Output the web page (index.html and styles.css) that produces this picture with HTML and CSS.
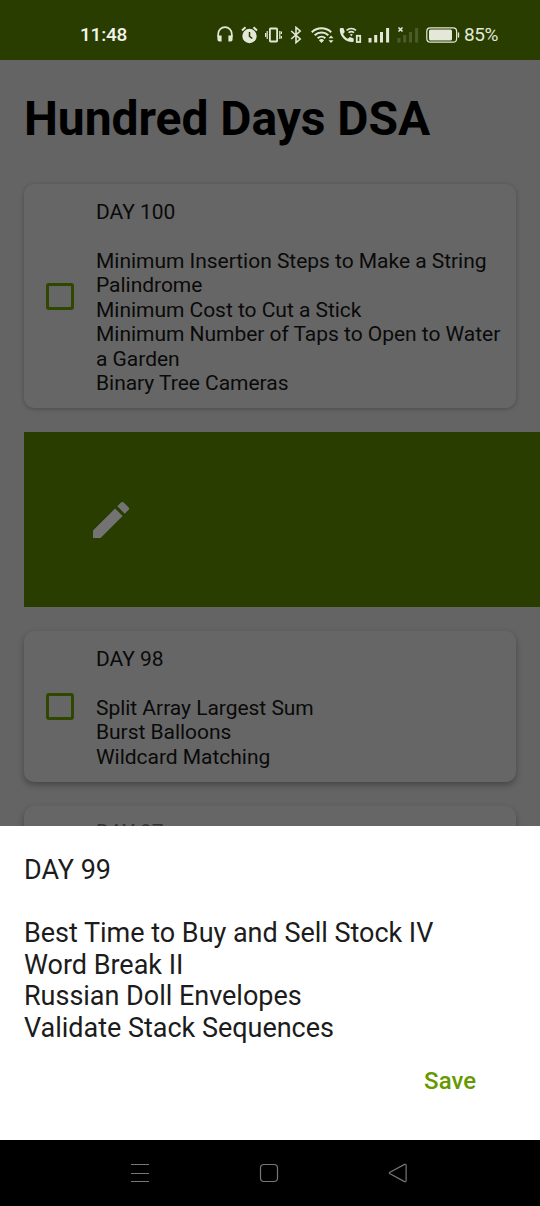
FILE: index.html
```html
<!DOCTYPE html>
<html lang="en">
<head>
<meta charset="utf-8">
<title>Hundred Days DSA</title>
<link rel="stylesheet" href="styles.css">
</head>
<body>
<div class="screen">
  <header class="status">
    <span class="clock">11:48</span>
    <div class="status-icons">
      <svg width="16" height="17" viewBox="0 0 16 17"><path d="M1.2 11V8a6.8 6.8 0 0 1 13.600 0v3" fill="none" stroke="currentColor" stroke-width="1.700"/><path d="M.4 9.500h4.200v6H2.400a2 2 0 0 1-2-2zM15.600 9.500h-4.200v6h2.200a2 2 0 0 0 2-2z" fill="currentColor"/></svg>
      <svg class="alarm" width="17" height="18" viewBox="0 0 17 18"><circle cx="8.500" cy="10" r="7.200" fill="currentColor"/><path d="M1 4.500 4.500 1.300M16 4.500 12.500 1.300" stroke="currentColor" stroke-width="2"/><path d="M8.500 6v4.300l2.800 2.200" fill="none" stroke="#293d00" stroke-width="1.500"/></svg>
      <svg class="vibrate" width="17" height="16" viewBox="0 0 17 16"><rect x="4.900" y="1.500" width="7.200" height="13" rx=".7" fill="none" stroke="currentColor" stroke-width="1.800"/><path d="M2.200 4v8M14.800 4v8M.6 6v4M16.400 4.500v2.500M16.400 9v2.500" stroke="currentColor" stroke-width="1.200"/></svg>
      <svg class="bluetooth" width="12" height="18" viewBox="0 0 12 18"><path d="m1.200 5 9 8L6 16.600V1.400L10.200 5l-9 8" fill="none" stroke="currentColor" stroke-width="1.600"/></svg>
      <svg class="wifi" width="23" height="18" viewBox="0 0 23 18"><path d="M.8 6.200a14 14 0 0 1 19.400 0M3.700 9.300a9.800 9.800 0 0 1 13.600 0M6.700 12.300a5.500 5.500 0 0 1 7.600 0" fill="none" stroke="currentColor" stroke-width="2.100"/><path d="m10.500 17-2.600-2.700a3.700 3.700 0 0 1 5.200 0zM17.500 12.300l2.500-2.700 2.500 2.700zM17.500 14.300l2.500 2.700 2.500-2.700z" fill="currentColor"/></svg>
      <svg class="call" width="23" height="18" viewBox="0 0 23 18"><path d="M.8 2.800Q1 2 2 2h2.400l1.400 4-1.700 2c1 2.200 2.600 3.800 4.800 4.800l1.900-1.700 3.900 1.300v2.500q0 1-1 1.100C6.500 16.400.2 10 .8 2.800Z" fill="currentColor"/><path d="M7.600 4.300a7.500 7.500 0 0 1 9.400 0M9.500 6.700a4.600 4.600 0 0 1 5.600 0" fill="none" stroke="currentColor" stroke-width="1.600"/><path d="m12.300 10.300-1.500-1.700a2.200 2.200 0 0 1 3 0z" fill="currentColor"/><rect x="17.800" y="9.800" width="3.400" height="6.200" fill="none" stroke="currentColor" stroke-width="1.800"/></svg>
      <svg class="signal" width="22" height="17" viewBox="0 0 22 17"><path d="M2 12V16.500M7.700 9V16.500M13.500 6V16.500M19.600 2V16.500" stroke="currentColor" stroke-width="3"/></svg>
      <svg class="signal" width="22" height="17" viewBox="0 0 22 17"><path d="M2 12V16.500M7.700 9V16.500M13.500 6V16.500M19.600 2V16.500" stroke="#4b5c2a" stroke-width="3"/><path d="m1.500 1.500 4 4m0-4-4 4" stroke="currentColor" stroke-width="1.600"/></svg>
      <svg class="battery" width="34" height="16" viewBox="0 0 34 16"><rect x=".8" y=".8" width="29.800" height="14.400" rx="3.500" fill="none" stroke="currentColor" stroke-width="1.200"/><rect x="3" y="2.600" width="23" height="10.800" rx="1.500" fill="currentColor"/><path d="M32.500 5.500v5" stroke="currentColor" stroke-width="1.400"/></svg>
      <span class="percent">85%</span>
    </div>
  </header>
  <main class="content">
    <h1 class="title">Hundred Days DSA</h1>
    <section class="card">
      <span class="checkbox"></span>
      <p class="task">DAY 100<br><br>Minimum Insertion Steps to Make a String Palindrome<br>Minimum Cost to Cut a Stick<br>Minimum Number of Taps to Open to Water a Garden<br>Binary Tree Cameras</p>
    </section>
    <section class="swipe">
      <svg width="48" height="48" viewBox="0 0 24 24"><path fill="#737373" d="M3 17.250V21h3.750L17.810 9.940l-3.750-3.750zM20.710 7.040a1 1 0 0 0 0-1.410l-2.340-2.340a1 1 0 0 0-1.410 0l-1.830 1.830 3.750 3.750z"/></svg>
    </section>
    <section class="card raised">
      <span class="checkbox"></span>
      <p class="task">DAY 98<br><br>Split Array Largest Sum<br>Burst Balloons<br>Wildcard Matching</p>
    </section>
    <section class="card raised partial">
      <p class="task">DAY 97</p>
    </section>
  </main>
  <section class="sheet">
    <p class="note">DAY 99<br><br>Best Time to Buy and Sell Stock IV<br>Word Break II<br>Russian Doll Envelopes<br>Validate Stack Sequences</p>
    <button class="save">Save</button>
  </section>
  <nav class="nav">
    <svg width="20" height="20" viewBox="0 0 20 20"><path d="M1 1.500h18M1 10.500h18M1 18.500h18"/></svg>
    <svg width="20" height="20" viewBox="0 0 20 20"><rect x="1.500" y="1.500" width="17" height="17" rx="3.500"/></svg>
    <svg width="20" height="20" viewBox="0 0 20 20"><path d="M2 9.200 16.500 1.400q1.600-.5 1.600 1v15.200q0 1.500-1.600 1L2 10.800q-1.400-.8 0-1.600Z"/></svg>
  </nav>
</div>
</body>
</html>
```
FILE: styles.css
```css
* { box-sizing: border-box; }
body { margin: 0; font-family: Roboto, sans-serif; }
.screen { display: flex; flex-direction: column; width: 540px; height: 1206px; overflow: hidden; background: #646464; }
.status { display: flex; align-items: center; justify-content: space-between; flex: none; height: 60px; padding: 9px 42px 0 80px; background: #293d00; color: #e3e8d9; }
.clock { font-size: 19px; font-weight: 500; letter-spacing: -.2px; color: #f2f5ec; }
.status-icons { display: flex; align-items: center; }
.status-icons svg { flex: none; }
.alarm { margin-left: 8px; }
.vibrate { margin-left: 7px; }
.bluetooth { margin-left: 8px; }
.wifi { margin-left: 9px; }
.call { margin-left: 5px; }
.signal { margin-left: 6px; }
.signal + .signal { margin-left: 7px; }
.battery { margin-left: 7px; }
.percent { width: 34px; margin-left: 4px; font-size: 19px; letter-spacing: -.4px; white-space: nowrap; }
.content { flex: none; height: 766px; padding: 31px 24px 0; overflow: hidden; }
.title { margin: 0 0 37.200px; font-size: 48px; line-height: 56px; font-weight: 700; letter-spacing: -.05px; color: #000; white-space: nowrap; }
.card { display: flex; align-items: center; margin-bottom: 24px; padding: 15.500px 12px 12.500px 22px; border-radius: 10px; background: #666; box-shadow: 0 1px 4px rgba(0, 0, 0, .25); }
.raised { box-shadow: 0 3px 6px rgba(0, 0, 0, .3); }
.checkbox { flex: none; width: 28px; height: 27px; margin: 0 22px 3px 0; border: 3px solid #304700; border-radius: 3px; }
.task { margin: 0; font-size: 21px; line-height: 24.500px; letter-spacing: -.03px; color: #0a0a0a; }
.partial { padding-top: 14.500px; padding-left: 72px; }
.partial .task { color: #333; }
.swipe { display: flex; align-items: center; height: 175px; margin: 0 -24px 24px 0; padding-left: 63px; background: #293d00; }
.sheet { display: flex; flex-direction: column; flex: none; height: 314px; padding: 29px 24px 0; background: #fff; }
.note { margin: 0; font-size: 27px; line-height: 31.600px; letter-spacing: -.02px; color: #1c1c1c; }
.save { align-self: flex-end; margin: 22px 40px 0 0; padding: 0; border: 0; background: none; font: 500 24px/28px Roboto, sans-serif; color: #690; }
.nav { display: flex; align-items: center; gap: 109px; flex: none; height: 66px; padding-left: 130px; background: #000; }
.nav svg { fill: none; stroke: #777; stroke-width: 1.200; }
```
